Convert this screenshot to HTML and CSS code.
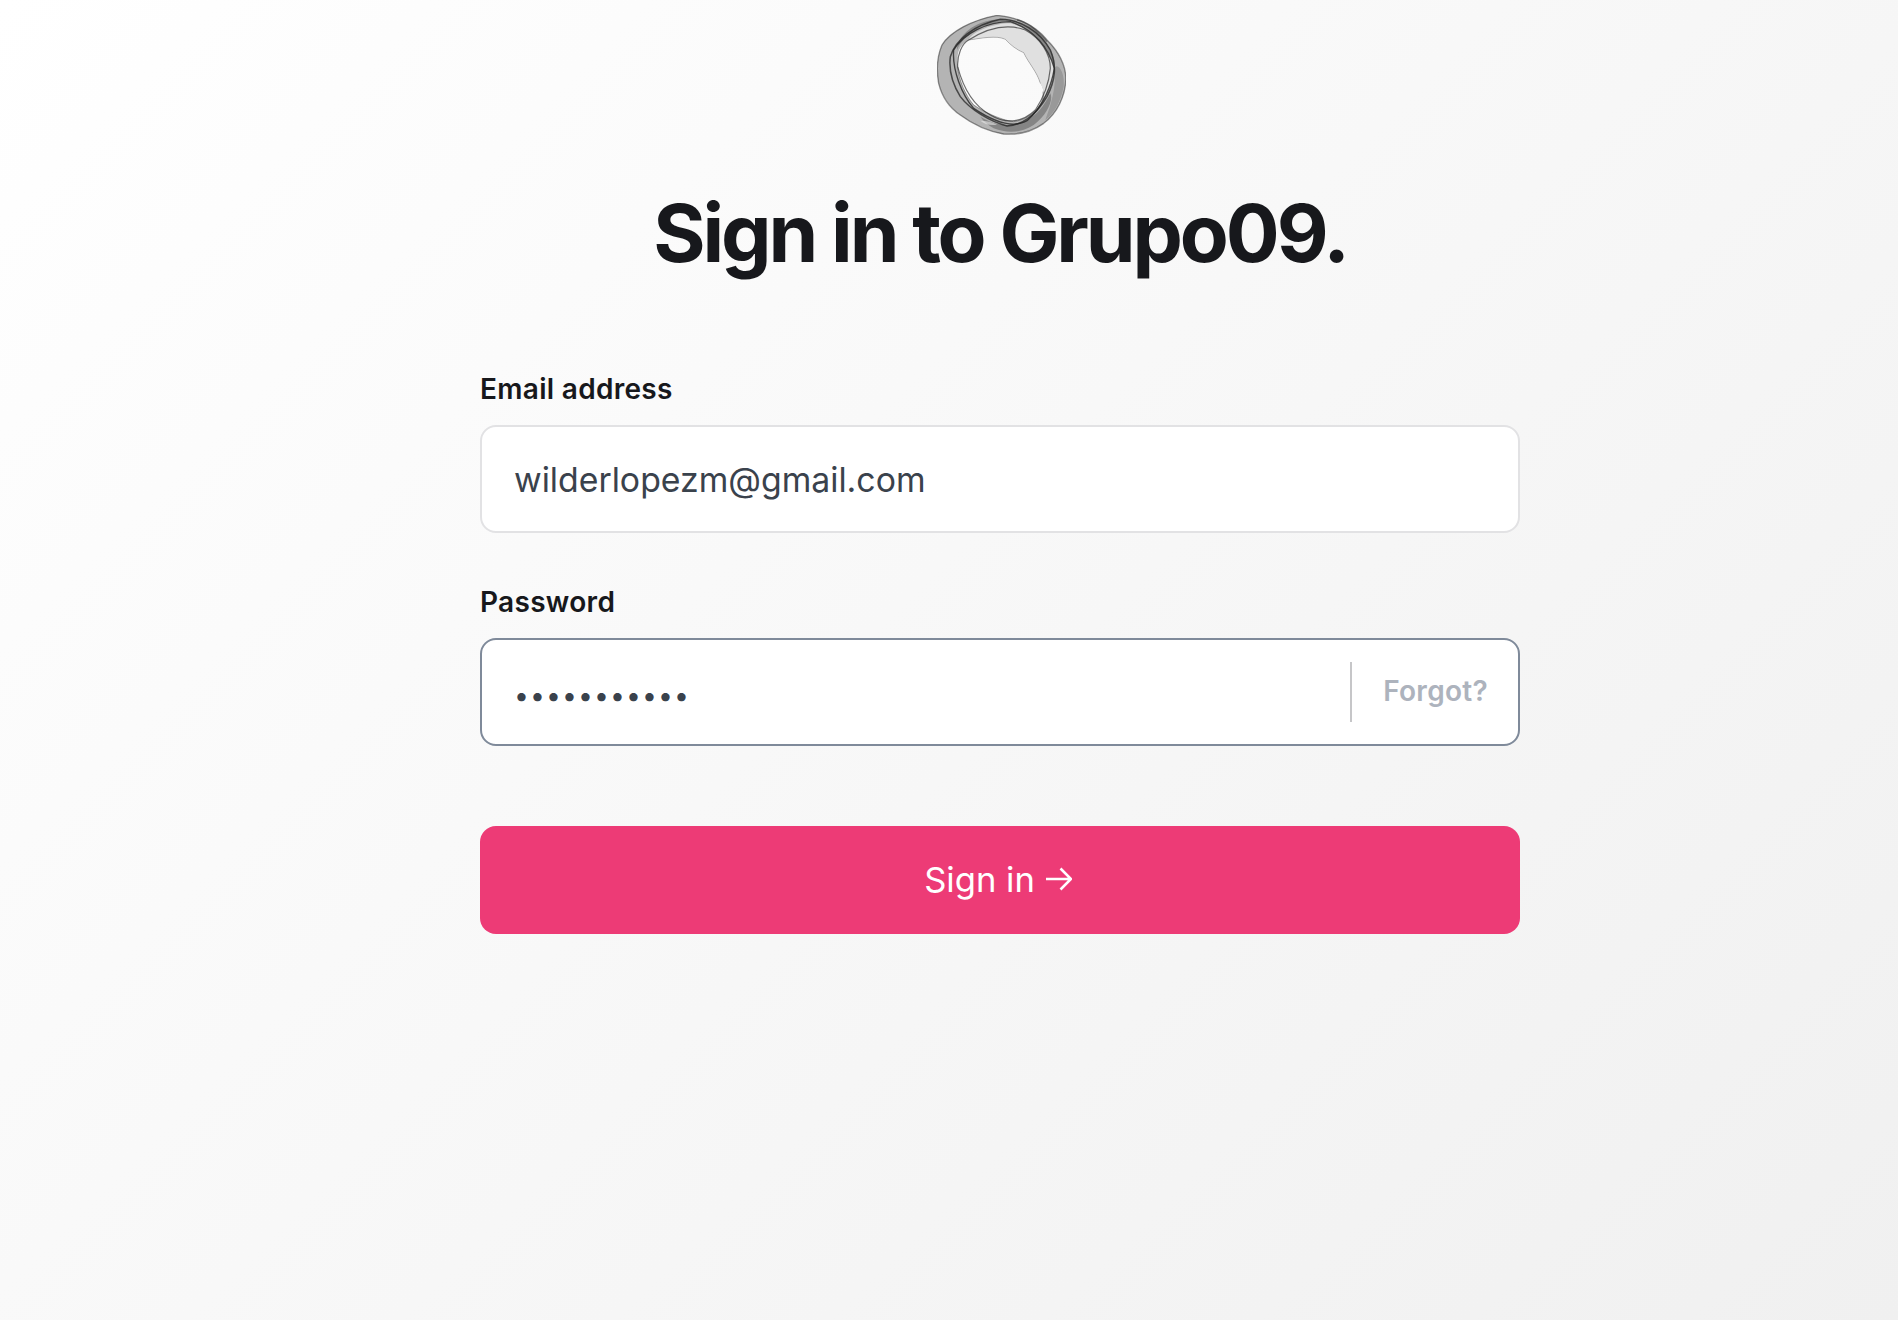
FILE: index.html
```html
<!DOCTYPE html>
<html lang="en">
<head>
<meta charset="utf-8">
<title>Sign in to Grupo09</title>
<link rel="stylesheet" href="styles.css">
</head>
<body>
<main class="page">
  <svg class="logo" width="129" height="120" viewBox="110 45 387 360" aria-hidden="true">
    <defs><filter id="soft" x="-5%" y="-5%" width="110%" height="110%"><feGaussianBlur stdDeviation="1.1"/></filter></defs>
    <g filter="url(#soft)">
      <path fill-rule="evenodd" fill="#b4b4b4" d="M290 46C340 50 400 70 440 120C470 150 495 190 497 235C495 290 470 340 430 370C395 395 350 405 310 402C270 395 220 375 180 345C150 325 125 290 115 250C108 210 110 170 125 135C150 95 215 60 290 46ZM205 120C170 140 170 165 172 200C175 240 195 285 220 315C250 335 300 360 340 365C370 360 400 345 415 320C432 300 435 270 420 250C410 215 385 190 370 158C350 150 330 135 315 118C290 105 240 115 205 120Z"/>
      <path fill="#e0e0e0" d="M205 120C240 115 290 105 315 118C330 135 350 150 370 158C385 190 410 215 420 250C430 268 434 285 430 300C450 260 462 230 462 205C440 130 390 85 330 70C280 70 215 95 205 120Z"/>
      <path fill="#5a5a5a" fill-opacity=".5" d="M170 150C190 100 260 62 330 62C390 80 440 125 462 200C470 185 450 130 400 85C350 55 290 50 240 70C200 85 170 120 170 150Z"/>
      <path fill="#444" fill-opacity=".42" d="M240 350C280 375 330 385 380 360C410 345 430 320 450 280C460 300 440 345 400 375C360 400 320 400 280 385C265 375 250 365 240 350Z"/>
      <path fill="#777" fill-opacity=".45" d="M462 205C470 185 495 215 490 260C480 310 460 340 435 360C450 320 470 260 462 205Z"/>
      <path fill="#eee" fill-opacity=".55" d="M240 362C260 362 275 366 290 374C270 378 252 372 240 362Z"/>
      <g fill="none" stroke="#222">
        <path stroke-opacity=".5" stroke-width="4" d="M290 46C340 50 400 70 440 120C470 150 495 190 497 235C495 290 470 340 430 370C395 395 350 405 310 402C270 395 220 375 180 345C150 325 125 290 115 250C108 210 110 170 125 135C150 95 215 60 290 46Z"/>
        <path stroke-opacity=".75" stroke-width="4.5" d="M150 170C165 120 220 75 300 58C360 58 420 95 450 150C470 200 465 240 440 290C410 340 370 375 320 378C270 365 210 330 180 290C155 250 145 210 150 170Z"/>
        <path stroke-opacity=".8" stroke-width="4" d="M160 150C190 100 260 65 330 65C390 85 440 130 462 205C455 250 430 320 380 362C340 385 280 365 220 325C185 285 155 210 160 150Z"/>
        <path stroke-opacity=".65" stroke-width="3.5" d="M172 200C170 165 185 130 205 120C260 85 320 70 375 90C420 115 450 160 450 205C445 260 425 300 405 330C370 365 320 375 270 345C225 320 190 270 172 200Z"/>
        <path stroke-opacity=".4" stroke-width="3" d="M172 200C175 240 195 285 220 315C250 335 300 360 340 365C370 360 400 345 415 320C425 308 430 292 428 275"/>
        <path stroke-opacity=".3" stroke-width="2.5" d="M205 120C240 115 290 105 315 118C330 135 350 150 370 158C385 190 410 215 420 250"/>
        <path stroke-opacity=".45" stroke-width="4" d="M350 60C380 65 415 95 440 125"/>
      </g>
    </g>
  </svg>
  <h1 class="title">Sign in to Grupo09.</h1>
  <form class="form">
    <div class="field">
      <label class="label" for="email">Email address</label>
      <div class="control">
        <input class="input" id="email" type="email" value="wilderlopezm@gmail.com">
      </div>
    </div>
    <div class="field">
      <label class="label" for="password">Password</label>
      <div class="control control-active">
        <input class="input input-password" id="password" type="password" value="12345678901">
        <a class="forgot" href="#">Forgot?</a>
      </div>
    </div>
    <button class="submit" type="button">
      <span>Sign in</span>
      <svg class="arrow" width="26" height="24" viewBox="0 0 26 24" aria-hidden="true"><path d="M0 12H25M14.5 1.5L25 12L14.5 22.5" fill="none" stroke="#fff" stroke-width="2.6"/></svg>
    </button>
  </form>
</main>
</body>
</html>
```

FILE: styles.css
```css
* { box-sizing: border-box; }
html, body { margin: 0; height: 100%; }
body {
  min-height: 1320px;
  background: linear-gradient(135deg, #ffffff 0%, #f0f0f0 100%);
  font-family: Inter, "Noto Sans", sans-serif;
  color: #17181c;
  overflow: hidden;
}
.page {
  width: 1040px;
  margin-left: 480px;
  padding-top: 15px;
  display: flex;
  flex-direction: column;
  align-items: center;
}
.logo { display: block; margin-left: 3px; flex: none; }
.title {
  margin: 48px 0 0;
  font-size: 80px;
  line-height: 100px;
  font-weight: 700;
  letter-spacing: -3.1px;
  color: #17181c;
}
.form {
  width: 100%;
  margin-top: 86px;
  display: flex;
  flex-direction: column;
}
.field { display: flex; flex-direction: column; margin-bottom: 49px; }
.field + .field { margin-bottom: 0; }
.label {
  font-size: 28px;
  line-height: 40px;
  font-weight: 600;
  letter-spacing: .3px;
  color: #17181c;
  margin-bottom: 16px;
}
.control {
  height: 108px;
  border: 2px solid #e2e2e4;
  border-radius: 16px;
  background: #fff;
  display: flex;
  align-items: center;
  padding: 0 30px 0 32px;
}
.control-active { border-color: #7f8a9a; }
.input {
  flex: 1;
  min-width: 0;
  border: 0;
  outline: 0;
  padding: 2px 0 0;
  background: transparent;
  font: 400 33.8px/44px Inter, "Noto Sans", sans-serif;
  color: #3a424c;
}
.input-password { font-size: 26.5px; padding-top: 6px; letter-spacing: 1.1px; }
.forgot {
  height: 60px;
  border-left: 2px solid #c6c6c8;
  padding-left: 31px;
  font-size: 28px;
  line-height: 58px;
  font-weight: 600;
  letter-spacing: .3px;
  color: #adb3bd;
  text-decoration: none;
}
.submit {
  margin-top: 80px;
  height: 108px;
  border: 0;
  border-radius: 16px;
  padding: 0 4px 2px 0;
  background: #ed3b76;
  color: #fff;
  font: 400 34.6px/44px Inter, "Noto Sans", sans-serif;
  display: flex;
  align-items: center;
  justify-content: center;
  gap: 11px;
}
.arrow { flex: none; }
```
